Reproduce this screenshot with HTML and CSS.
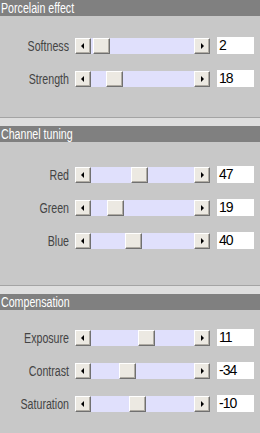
FILE: index.html
```html
<!DOCTYPE html>
<html>
<head lang="en">
    <meta charset="UTF-8">
    <title>Porcelain</title>
    <link rel="stylesheet" href="styles.css">
</head>
<body>
<div class="panel">
    <div class="section s1">
        <div class="head"><span>Porcelain effect</span></div>
        <div class="body">
            <div class="row">
                <span class="label">Softness</span>
                <div class="bar">
                    <span class="btn prev"></span>
                    <div class="track"><span class="thumb" style="left:2px"></span></div>
                    <span class="btn next"></span>
                </div>
                <span class="val">2</span>
            </div>
            <div class="row">
                <span class="label">Strength</span>
                <div class="bar">
                    <span class="btn prev"></span>
                    <div class="track"><span class="thumb" style="left:15px"></span></div>
                    <span class="btn next"></span>
                </div>
                <span class="val">18</span>
            </div>
        </div>
    </div>

    <div class="section s2">
        <div class="head"><span>Channel tuning</span></div>
        <div class="body">
            <div class="row">
                <span class="label">Red</span>
                <div class="bar">
                    <span class="btn prev"></span>
                    <div class="track"><span class="thumb" style="left:40px"></span></div>
                    <span class="btn next"></span>
                </div>
                <span class="val">47</span>
            </div>
            <div class="row">
                <span class="label">Green</span>
                <div class="bar">
                    <span class="btn prev"></span>
                    <div class="track"><span class="thumb" style="left:16px"></span></div>
                    <span class="btn next"></span>
                </div>
                <span class="val">19</span>
            </div>
            <div class="row">
                <span class="label">Blue</span>
                <div class="bar">
                    <span class="btn prev"></span>
                    <div class="track"><span class="thumb" style="left:34px"></span></div>
                    <span class="btn next"></span>
                </div>
                <span class="val">40</span>
            </div>
        </div>
    </div>

    <div class="section s3">
        <div class="head"><span>Compensation</span></div>
        <div class="body">
            <div class="row">
                <span class="label">Exposure</span>
                <div class="bar">
                    <span class="btn prev"></span>
                    <div class="track"><span class="thumb" style="left:47px"></span></div>
                    <span class="btn next"></span>
                </div>
                <span class="val">11</span>
            </div>
            <div class="row">
                <span class="label">Contrast</span>
                <div class="bar">
                    <span class="btn prev"></span>
                    <div class="track"><span class="thumb" style="left:28px"></span></div>
                    <span class="btn next"></span>
                </div>
                <span class="val">-34</span>
            </div>
            <div class="row">
                <span class="label">Saturation</span>
                <div class="bar">
                    <span class="btn prev"></span>
                    <div class="track"><span class="thumb" style="left:38px"></span></div>
                    <span class="btn next"></span>
                </div>
                <span class="val">-10</span>
            </div>
        </div>
    </div>
</div>
</body>
</html>
```

FILE: styles.css
```css
*{
    margin:0;
    padding:0;
    box-sizing:border-box;
}
body{
    background:#c8c8c8;
    font-family:"Liberation Sans",Arial,sans-serif;
    font-size:12px;
}
.panel{
    width:260px;
    height:433px;
    background:#c8c8c8;
}
.head{
    height:16px;
    line-height:16px;
    background:#808080;
    color:#fff;
    padding-left:1px;
    font-size:14px;
}
.head span{
    display:inline-block;
    transform:scaleX(0.76);
    transform-origin:left center;
}
.body{
    display:flex;
    flex-direction:column;
    gap:16px;
}
.s1 .body{
    padding:21px 0 30px;
    border-bottom:1px solid #a4a4a4;
    margin-bottom:8px;
    box-shadow:0 8px 0 #dedede;
}
.s2 .body{
    padding:24px 0 36px;
    border-bottom:1px solid #a4a4a4;
    margin-bottom:8px;
    box-shadow:0 8px 0 #dedede;
}
.s3 .body{
    padding:19px 0 0;
}
.row{
    display:flex;
    align-items:center;
    height:17px;
}
.label{
    width:69px;
    text-align:right;
    color:#444;
    font-size:14px;
    transform:scaleX(0.76);
    transform-origin:right center;
    white-space:nowrap;
}
.bar{
    display:flex;
    margin-left:6px;
    width:135px;
    height:16px;
}
.btn,
.thumb{
    display:block;
    width:17px;
    height:16px;
    background:#ece9e2;
    border-top:1px solid #fff;
    border-left:1px solid #fff;
    border-right:1px solid #707070;
    border-bottom:1px solid #707070;
    box-shadow:inset -1px -1px 0 #b0aca4;
    position:relative;
}
.btn{
    width:16px;
}
.btn::after{
    content:"";
    position:absolute;
    top:4px;
    width:0;
    height:0;
    border-top:3px solid transparent;
    border-bottom:3px solid transparent;
}
.prev::after{
    left:5px;
    border-right:3px solid #000;
}
.next::after{
    left:6px;
    border-left:3px solid #000;
}
.track{
    flex:1;
    position:relative;
    background:#e0e0fc;
}
.thumb{
    position:absolute;
    top:0;
}
.val{
    margin-left:7px;
    width:37px;
    height:17px;
    line-height:17px;
    background:#fff;
    color:#000;
    padding-left:2px;
    font-size:14px;
    letter-spacing:-1px;
}
```
